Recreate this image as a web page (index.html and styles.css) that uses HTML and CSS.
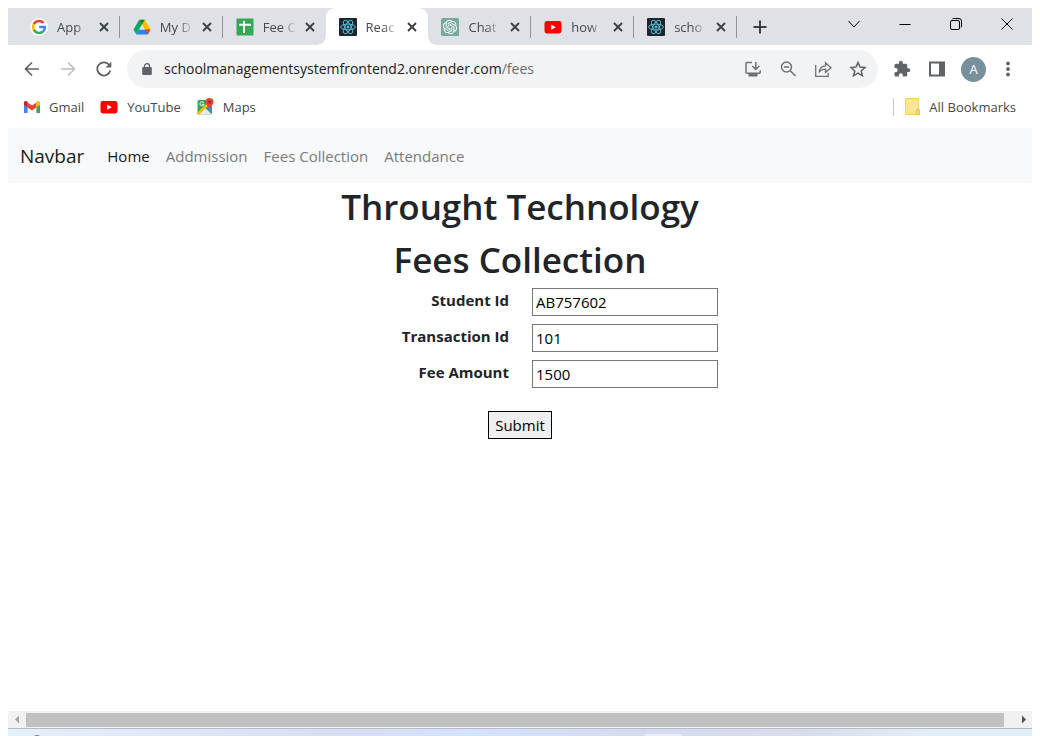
FILE: index.html
```html
<!DOCTYPE html>
<html lang="en">
<head>
<meta charset="utf-8">
<title>Fees Collection</title>
<link rel="stylesheet" href="styles.css">
</head>
<body>
<svg class="symbols" aria-hidden="true">
  <symbol id="close" viewBox="0 0 10 10"><path d="M1 1l8 8M9 1L1 9" stroke="#3c4043" stroke-width="1.9" fill="none"/></symbol>
  <symbol id="react" viewBox="0 0 18 18"><rect width="18" height="18" rx="1" fill="#20232a"/><g fill="none" stroke="#53b9d6" stroke-width="1"><ellipse cx="9" cy="9" rx="7.4" ry="2.9"/><ellipse cx="9" cy="9" rx="7.4" ry="2.9" transform="rotate(60 9 9)"/><ellipse cx="9" cy="9" rx="7.4" ry="2.9" transform="rotate(120 9 9)"/></g><circle cx="9" cy="9" r="1.5" fill="#53b9d6"/></symbol>
  <symbol id="youtube" viewBox="0 0 18 18"><rect x="0.5" y="3" width="17" height="12.5" rx="2.4" fill="#f00"/><path d="M7.2 6.6v5.2l4.6-2.6z" fill="#fff"/></symbol>
</svg>
<div class="browser">
  <header class="tabstrip">
    <div class="tabs">
      <div class="tab">
        <svg class="favicon" viewBox="0 0 18 18"><circle cx="9" cy="9" r="9" fill="#fff"/><g fill="none" stroke-width="2.5"><path d="M13.6 5A6 6 0 0 0 3.8 6.2" stroke="#ea4335"/><path d="M3.8 6.2a6 6 0 0 0 0 5.6" stroke="#fbbc05"/><path d="M3.8 11.8a6 6 0 0 0 9.2 1.7" stroke="#34a853"/><path d="M13 13.5A6 6 0 0 0 14.8 9H9.2" stroke="#4285f4"/></g></svg>
        <span class="tab-title">App</span>
        <button class="tab-close" aria-label="Close tab"><svg><use href="#close"/></svg></button>
      </div>
      <div class="tab">
        <svg class="favicon" viewBox="0 0 18 18"><path d="M11.8 1.8l5.7 9.8h-5.6L6.2 1.8z" fill="#ffba00"/><path d="M9 6.6L6.2 1.8.5 11.6l2.8 4.8z" fill="#0da960"/><path d="M6.2 1.8h5.6L9 6.6z" fill="#188038"/><path d="M6.1 11.6h11.4l-2.8 4.8H3.3z" fill="#2684fc"/><path d="M11.9 11.6h5.6l-2.8 4.8z" fill="#ea4335"/><path d="M9 6.7l2.9 4.9H6.1z" fill="#dee1e6"/></svg>
        <span class="tab-title">My D</span>
        <button class="tab-close" aria-label="Close tab"><svg><use href="#close"/></svg></button>
      </div>
      <div class="tab">
        <svg class="favicon" viewBox="0 0 18 18"><rect x=".5" y=".5" width="17" height="17" rx="1" fill="#34a853"/><path d="M3 6.7h12M8 3v12" stroke="#fff" stroke-width="2"/></svg>
        <span class="tab-title">Fee C</span>
        <button class="tab-close" aria-label="Close tab"><svg><use href="#close"/></svg></button>
      </div>
      <div class="tab tab-active">
        <svg class="favicon"><use href="#react"/></svg>
        <span class="tab-title">Reac</span>
        <button class="tab-close" aria-label="Close tab"><svg><use href="#close"/></svg></button>
      </div>
      <div class="tab">
        <svg class="favicon" viewBox="0 0 30 30"><path d="M3 0h24a3 3 0 0 1 3 3v27H3a3 3 0 0 1-3-3V3a3 3 0 0 1 3-3z" fill="#75a99c"/><path transform="translate(3 3)" fill="#fff" d="M22.2819 9.8211a5.9847 5.9847 0 0 0-.5157-4.9108 6.0462 6.0462 0 0 0-6.5098-2.9A6.0651 6.0651 0 0 0 4.9807 4.1818a5.9847 5.9847 0 0 0-3.9977 2.9 6.0462 6.0462 0 0 0 .7427 7.0966 5.98 5.98 0 0 0 .511 4.9107 6.051 6.051 0 0 0 6.5146 2.9001A5.9847 5.9847 0 0 0 13.2599 24a6.0557 6.0557 0 0 0 5.7718-4.2058 5.9894 5.9894 0 0 0 3.9977-2.9001 6.0557 6.0557 0 0 0-.7475-7.0729zm-9.022 12.6081a4.4755 4.4755 0 0 1-2.8764-1.0408l.1419-.0804 4.7783-2.7582a.7948.7948 0 0 0 .3927-.6813v-6.7369l2.02 1.1686a.071.071 0 0 1 .038.0615v5.5826a4.504 4.504 0 0 1-4.4945 4.4944zm-9.6607-4.1254a4.4708 4.4708 0 0 1-.5346-3.0137l.142.0852 4.783 2.7582a.7712.7712 0 0 0 .7806 0l5.8428-3.3685v2.3324a.0804.0804 0 0 1-.0332.0615L9.74 19.9502a4.4992 4.4992 0 0 1-6.1408-1.6464zM2.3408 7.8956a4.485 4.485 0 0 1 2.3655-1.9728V11.6a.7664.7664 0 0 0 .3879.6765l5.8144 3.3543-2.0201 1.1685a.0757.0757 0 0 1-.071 0l-4.8303-2.7865A4.504 4.504 0 0 1 2.3408 7.872zm16.5963 3.8558L13.1038 8.364 15.1192 7.2a.0757.0757 0 0 1 .071 0l4.8303 2.7913a4.4944 4.4944 0 0 1-.6765 8.1042v-5.6772a.79.79 0 0 0-.407-.667zm2.0107-3.0231l-.142-.0852-4.7735-2.7818a.7759.7759 0 0 0-.7854 0L9.409 9.2297V6.8974a.0662.0662 0 0 1 .0284-.0615l4.8303-2.7866a4.4992 4.4992 0 0 1 6.6802 4.66zM8.3065 12.863l-2.02-1.1638a.0804.0804 0 0 1-.038-.0567V6.0742a4.4992 4.4992 0 0 1 7.3757-3.4537l-.142.0805L8.704 5.459a.7948.7948 0 0 0-.3927.6813zm1.0976-2.3654l2.602-1.4998 2.6069 1.4998v2.9994l-2.5974 1.4997-2.6067-1.4997Z"/></svg>
        <span class="tab-title">Chat</span>
        <button class="tab-close" aria-label="Close tab"><svg><use href="#close"/></svg></button>
      </div>
      <div class="tab">
        <svg class="favicon"><use href="#youtube"/></svg>
        <span class="tab-title">how</span>
        <button class="tab-close" aria-label="Close tab"><svg><use href="#close"/></svg></button>
      </div>
      <div class="tab">
        <svg class="favicon"><use href="#react"/></svg>
        <span class="tab-title">scho</span>
        <button class="tab-close" aria-label="Close tab"><svg><use href="#close"/></svg></button>
      </div>
    </div>
    <button class="new-tab" aria-label="New tab"><svg width="14" height="14" viewBox="0 0 14 14"><path d="M7 .5v13M.5 7h13" stroke="#3c4043" stroke-width="2"/></svg></button>
    <div class="window-controls">
      <button aria-label="Search tabs"><svg width="12" height="12" viewBox="0 0 12 12"><path d="M.5 3L6 9l5.5-6"/></svg></button>
      <button aria-label="Minimize"><svg width="12" height="12" viewBox="0 0 12 12"><path d="M.5 6.5h11"/></svg></button>
      <button aria-label="Restore"><svg width="12" height="12" viewBox="0 0 12 12"><rect x=".5" y="2.5" width="9" height="9" rx="1.5"/><path d="M2.5 1q.5-.5 1.5-.5h5a2.5 2.5 0 0 1 2.5 2.5v5q0 1-.5 1.500"/></svg></button>
      <button aria-label="Close"><svg width="12" height="12" viewBox="0 0 12 12"><path d="M.5.5l11 11M11.5.5l-11 11"/></svg></button>
    </div>
  </header>

  <div class="toolbar">
    <div class="history">
      <button aria-label="Back"><svg width="16" height="16" viewBox="0 0 16 16" fill="none" stroke="#5f6368" stroke-width="1.7"><path d="M15 8H2M8 1.5L1.5 8 8 14.5"/></svg></button>
      <button aria-label="Forward"><svg width="16" height="16" viewBox="0 0 16 16" fill="none" stroke="#babcbe" stroke-width="1.5"><path d="M1 8h13M8 1.5L14.5 8 8 14.5"/></svg></button>
      <button aria-label="Reload"><svg width="16" height="16" viewBox="0 0 16 16" fill="none" stroke="#5f6368" stroke-width="1.8"><path d="M14.3 9.6A6.600 6.600 0 1 1 12.8 3.5l1.4 1.6"/><path d="M15.3.8v5.8H9.5z" fill="#5f6368" stroke="none"/></svg></button>
    </div>
    <div class="omnibox">
      <svg width="10" height="12" viewBox="0 0 10 12"><rect x=".2" y="4" width="9.6" height="8" rx="1" fill="#5f6368"/><path d="M2.5 5V3.2a2.5 2.5 0 0 1 5 0V5" fill="none" stroke="#5f6368" stroke-width="1.3"/></svg>
      <span class="url">schoolmanagementsystemfrontend2.onrender.com<span class="url-path">/fees</span></span>
      <div class="page-actions">
        <button aria-label="Install"><svg width="18" height="18" viewBox="0 0 18 18" fill="none" stroke="#6d7175" stroke-width="1.5"><path d="M8 2.5H3a1 1 0 0 0-1 1v8.8a1 1 0 0 0 1 1h12.2a1 1 0 0 0 1-1v-2M11.8 2v7M8.3 6l3.5 3.5L15.3 6"/><path d="M4.5 15h9" stroke-width="3"/></svg></button>
        <button aria-label="Zoom"><svg width="18" height="18" viewBox="0 0 18 18" fill="none" stroke="#6d7175" stroke-width="1.5"><circle cx="7.5" cy="7" r="5"/><path d="M11 10.5l5.500 5.500M5 7h5"/></svg></button>
        <button aria-label="Share"><svg width="18" height="18" viewBox="0 0 18 18" fill="none" stroke="#6d7175" stroke-width="1.3"><path d="M1.7 5v11.300h12.500v-3.500"/><path d="M5 12.5C5.5 8.5 8 6 11.5 5.8V2.7l5.500 5-5.500 4.600V9.2C8.5 9.2 6.5 10.2 5 12.5z"/></svg></button>
        <button aria-label="Bookmark"><svg width="18" height="18" viewBox="0 0 18 18" fill="none" stroke="#5f6368" stroke-width="1.5"><path d="M9 2.5l2 4.6 5 .5-3.8 3.3 1.2 4.9L9 13.2l-4.400 2.600 1.200-4.900L2 7.600l5-.5z"/></svg></button>
      </div>
    </div>
    <div class="tools">
      <button aria-label="Extensions"><svg width="18" height="18" viewBox="0 0 24 24" fill="#5f6368"><path d="M20.500 11H19V7a2 2 0 0 0-2-2h-4V3.500a2.500 2.500 0 0 0-5 0V5H4a2 2 0 0 0-2 2v3.800h1.500a2.700 2.700 0 0 1 0 5.400H2V20a2 2 0 0 0 2 2h3.800v-1.500a2.700 2.700 0 0 1 5.400 0V22H17a2 2 0 0 0 2-2v-4h1.500a2.500 2.500 0 0 0 0-5z"/></svg></button>
      <button aria-label="Side panel"><svg width="18" height="16" viewBox="0 0 18 16"><path d="M3 1.5h14v13H3z" fill="none" stroke="#5f6368" stroke-width="2"/><path d="M12 1h5v14h-5z" fill="#5f6368"/></svg></button>
      <button class="avatar" aria-label="Profile">A</button>
      <button aria-label="Menu"><svg width="14" height="16" viewBox="0 0 14 16" fill="#5f6368"><circle cx="6" cy="2.5" r="1.9"/><circle cx="6" cy="8" r="1.9"/><circle cx="6" cy="13.5" r="1.9"/></svg></button>
    </div>
  </div>

  <nav class="bookmarks" aria-label="Bookmarks">
    <a href="#"><svg width="16" height="12" viewBox="0 0 16 12"><path d="M0 1.5V12h3.600V5z" fill="#4285f4"/><path d="M12.4 5v7H16V1.5z" fill="#34a853"/><path d="M3.6 1.4v5L8 9.5l4.4-3.1v-5L8 4.6z" fill="#ea4335"/><path d="M0 2c0-2 2-2.500 3.600-1.200v5.600L0 3.8z" fill="#c5221f"/><path d="M16 2c0-2-2-2.500-3.600-1.200v5.600L16 3.8z" fill="#fbbc04"/></svg>Gmail</a>
    <a href="#"><svg width="18" height="18"><use href="#youtube"/></svg>YouTube</a>
    <a href="#"><svg width="17" height="17" viewBox="0 0 17 17"><rect x=".5" y="2" width="14.5" height="14.5" rx="1.5" fill="#34a853"/><path d="M7.5 9.5l7.5 7H1z" fill="#e8eaed"/><path d="M9 8.5l6-1V15z" fill="#4285f4"/><path d="M.8 16L14 3" stroke="#fbbc04" stroke-width="2.5"/><path d="M6.700 4.800a2 2 0 1 0 .2 1.500H5" fill="none" stroke="#fff"/><path d="M12.500 0A4 4 0 0 1 16.500 4c0 3-3.300 4-4 8.500C11.800 8 8.500 7 8.500 4a4 4 0 0 1 4-4z" fill="#ea4335"/><circle cx="12.5" cy="4" r="1.5" fill="#9d2a22"/></svg>Maps</a>
    <a class="all-bookmarks" href="#"><svg width="15" height="17" viewBox="0 0 14 16"><path d="M1.5.5h11v10.800q1 .2 1 1.500v2.700h-12q-1 0-1-1v-13q0-1 1-1z" fill="#ffe596" stroke="#f2d25c"/><path d="M10.500 15v-3q0-1.500 1.500-1.500t1.500 1.500v3.500h-2q-1 0-1-.5z" fill="#fbdc70" stroke="#e8c33e"/></svg>All Bookmarks</a>
  </nav>

  <nav class="navbar">
    <a class="brand" href="#">Navbar</a>
    <a class="current" href="#">Home</a>
    <a href="#">Addmission</a>
    <a href="#">Fees Collection</a>
    <a href="#">Attendance</a>
  </nav>

  <main>
    <h1>Throught Technology</h1>
    <h1>Fees Collection</h1>
    <form>
      <div class="fields">
        <label for="student">Student Id</label><input id="student" type="text" value="AB757602">
        <label for="transaction">Transaction Id</label><input id="transaction" type="text" value="101">
        <label for="amount">Fee Amount</label><input id="amount" type="text" value="1500">
      </div>
      <button class="submit" type="button">Submit</button>
    </form>
  </main>

  <div class="scrollbar">
    <svg width="18" height="17" viewBox="0 0 18 17"><path d="M11 4.5v8L7 8.5z" fill="#a3a3a3"/></svg>
    <div class="thumb"></div>
    <svg width="28" height="17" viewBox="0 0 28 17"><path d="M18 4.5v8l4-4z" fill="#505050"/></svg>
  </div>
  <footer class="taskbar">
    <svg width="14" height="3" viewBox="0 0 14 3"><path d="M2.5 3Q7-.5 11.5 3z" fill="#555068"/></svg>
    <span class="task-button"></span>
  </footer>
</div>
</body>
</html>
```

FILE: styles.css
```css
* { box-sizing: border-box; }

body {
  margin: 0;
  background: #fff;
  color: #212529;
  font: 15px/24px "Open Sans", "Noto Sans", sans-serif;
}

a { color: inherit; text-decoration: none; }

button {
  display: flex;
  align-items: center;
  justify-content: center;
  padding: 0;
  border: 0;
  background: none;
  font: inherit;
}

.symbols { display: none; }

.browser {
  display: flex;
  flex-direction: column;
  min-height: 100vh;
  padding: 8px 8px 0;
}

/* Tabs */
.tabstrip {
  display: flex;
  align-items: stretch;
  height: 37px;
  padding-left: 9px;
  background: #dee1e6;
}

.tabs { display: flex; flex: 0 1 720px; min-width: 0; }

.tab {
  display: flex;
  flex: 1;
  align-items: center;
  min-width: 0;
  padding: 0 11px 0 13px;
  background: linear-gradient(#8e9196, #8e9196) right center / 1px 22px no-repeat;
  color: #45494d;
  font-size: 13px;
}

.tab:nth-child(3) { background: none; }

.tab.tab-active {
  position: relative;
  border-radius: 9px 9px 0 0;
  background: #fff;
}

.tab-active::before,
.tab-active::after {
  position: absolute;
  bottom: 0;
  width: 8px;
  height: 8px;
  content: "";
}

.tab-active::before {
  right: 100%;
  background: radial-gradient(circle at 0 0, transparent 7px, #fff 8px);
}

.tab-active::after {
  left: 100%;
  background: radial-gradient(circle at 100% 0, transparent 7px, #fff 8px);
}

.favicon { flex: none; width: 18px; height: 18px; }

.tab-title {
  flex: 1;
  min-width: 0;
  margin-left: 9px;
  overflow: hidden;
  white-space: nowrap;
  -webkit-mask-image: linear-gradient(90deg, #000 55%, transparent);
  mask-image: linear-gradient(90deg, #000 55%, transparent);
}

.tab-close { margin-left: 9px; }
.tab-close svg { width: 10px; height: 10px; }
.new-tab { width: 46px; }

.window-controls { display: flex; margin-left: auto; }
.window-controls button { width: 51px; padding-bottom: 6px; }
.window-controls svg { fill: none; stroke: #000; stroke-width: 1; }

/* Address bar */
.toolbar {
  display: flex;
  align-items: center;
  gap: 15px;
  height: 48px;
  padding: 0 16px;
}

.history { display: flex; gap: 20px; }

.omnibox {
  display: flex;
  flex: 1;
  align-items: center;
  gap: 12px;
  height: 38px;
  padding: 0 11px 0 15px;
  border-radius: 19px;
  background: #f1f3f4;
}

.url { flex: 1; color: #202124; font-size: 14px; }
.url-path { color: #6b6f73; }
.page-actions { display: flex; gap: 17px; }
.tools { display: flex; align-items: center; gap: 16px; }

.avatar {
  width: 25px;
  height: 25px;
  border-radius: 50%;
  background: #78909c;
  color: #fff;
  font-size: 13px;
}

.bookmarks {
  display: flex;
  align-items: center;
  gap: 16px;
  height: 35px;
  padding: 0 16px 8px;
  color: #45494d;
  font-size: 13px;
}

.bookmarks a { display: flex; align-items: center; gap: 9px; line-height: 18px; }

.bookmarks .all-bookmarks {
  margin-left: auto;
  padding-left: 11px;
  border-left: 1px solid #c8cacc;
}

/* Page */
.navbar {
  display: flex;
  align-items: center;
  gap: 16px;
  height: 55px;
  padding: 0 12px;
  background: #f8f9fa;
  color: #7a7b7c;
}

.navbar .brand { margin-right: 7px; color: #1a1b1c; font-size: 19px; }
.navbar .current { color: #191919; }

main { flex: 1; padding-top: 1px; }

h1 {
  margin: 0 0 8px;
  font-size: 35px;
  font-weight: 600;
  line-height: 45px;
  text-align: center;
}

form { display: flex; flex-direction: column; align-items: center; }

h1 + form { margin-top: -2px; }

.fields {
  display: grid;
  grid-template-columns: 187px 186px;
  gap: 8px 23px;
}

label { font-weight: 700; text-align: right; }

input {
  width: 100%;
  height: 28px;
  padding: 1px 3px;
  border: 1px solid #767676;
  background: #fff;
  color: #000;
  font: inherit;
}

.submit {
  height: 28px;
  margin-top: 23px;
  padding: 0 6px;
  border: 1px solid #000;
  background: #efefef;
  color: #000;
}

.scrollbar { display: flex; height: 17px; background: #f1f1f1; }
.thumb { flex: 1; margin: 2px 0 1px; background: #c1c1c1; }

.taskbar {
  display: flex;
  justify-content: space-between;
  height: 8px;
  padding: 5px 350px 0 22px;
  border-top: 1px solid #b3bac9;
  background: linear-gradient(90deg, #e4f0fa, #d8ddf4 32%, #d3e3fa 45%, #d6daf0 62%, #d8dcea 78%, #e2eef8 90%);
}

.task-button { width: 38px; border-radius: 3px 3px 0 0; background: #edf0fa; }
```
